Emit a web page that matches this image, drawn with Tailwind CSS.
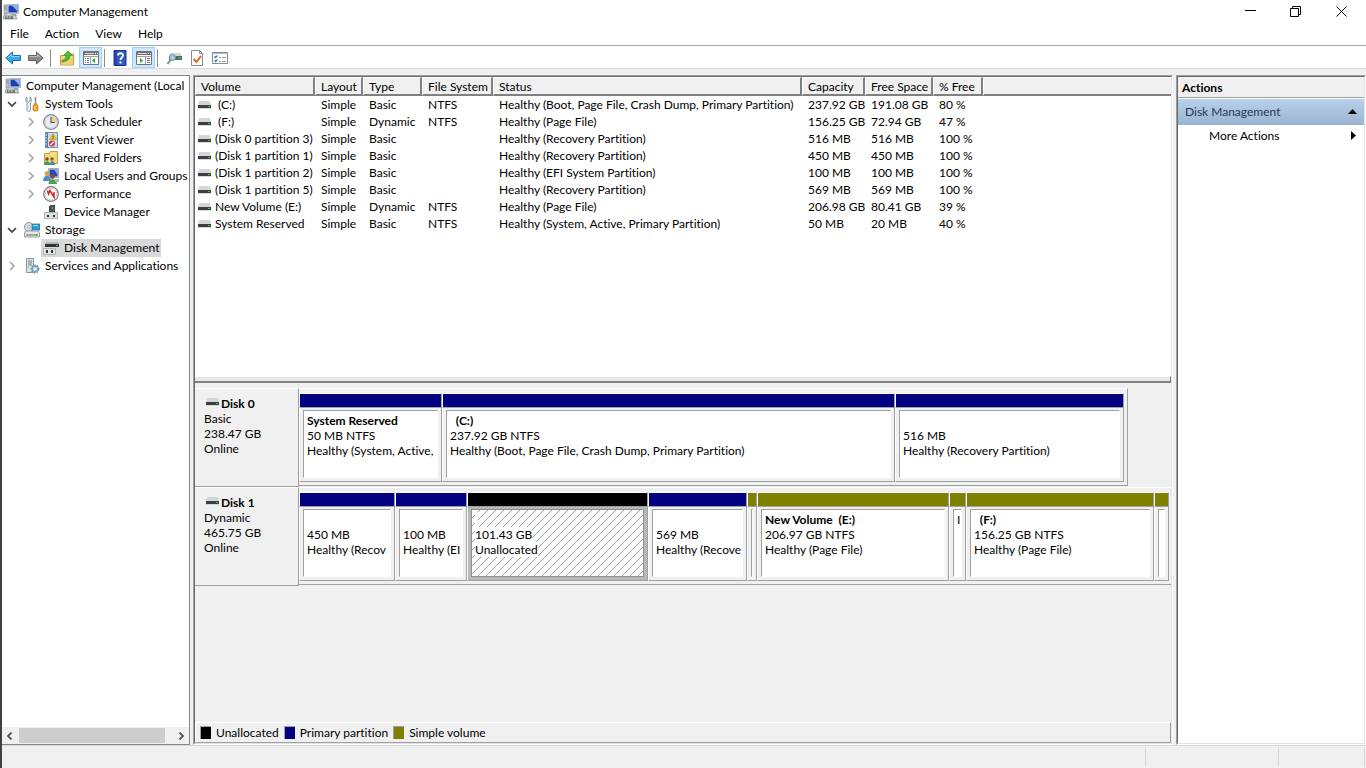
<!DOCTYPE html>
<html lang="en">
<head>
    <meta charset="UTF-8">
    <meta name="viewport" content="width=device-width, initial-scale=1.0">
    <title>Computer Management</title>
    <script src="https://cdn.jsdelivr.net/npm/@tailwindcss/browser@4"></script>
</head>
<body class="h-screen flex flex-col overflow-hidden border-l-2 border-[#404040] bg-[#f0f0f0] font-['Lato',sans-serif] [font-variant-ligatures:none] text-[12px] leading-[15px] text-black">

    <!-- Icon sprites -->
    <svg class="hidden">
        <symbol id="i-computer" viewBox="0 0 16 16">
            <path d="M1 1h3v9H1z" fill="#b9c4cf" stroke="#7c8791" stroke-width=".6"/>
            <path d="M1.500 3h2M1.500 5h2" stroke="#6a7682" stroke-width=".7"/>
            <rect x="4.500" y=".5" width="11" height="9" fill="#e0e5e8" stroke="#b3bcc4"/>
            <rect x="5.500" y="1.500" width="9" height="7" fill="#1c3fb5"/>
            <path d="M9 1.500h5.500v6z" fill="#8fb4f3"/>
            <path d="M9 10h4l1 2H8z" fill="#9aa3aa"/>
            <path d="M1 11h11l2 4H0z" fill="#cfd3cf" stroke="#7f8780" stroke-width=".7"/>
            <path d="M2 12h8v3H2z" fill="#6f7770"/>
            <path d="M3 13h2M6 13h2" stroke="#e8e8e8"/>
        </symbol>
        <symbol id="i-back" viewBox="0 0 16 16">
            <path d="M.8 8L7.500 2v3.500h8v5h-8V14z" fill="#36a9e8" stroke="#1c6fae"/>
            <path d="M3 7.800L6.500 4.500v2h8" fill="none" stroke="#8ed6f8"/>
        </symbol>
        <symbol id="i-forward" viewBox="0 0 16 16">
            <path d="M15.200 8L8.500 2v3.500h-8v5h8V14z" fill="#8b8b8b" stroke="#606060"/>
            <path d="M1.500 6.500h8v-2L12.500 7.500" fill="none" stroke="#bdbdbd"/>
        </symbol>
        <symbol id="i-up" viewBox="0 0 16 16">
            <path d="M1.500 5.500h5l1-1.500h7v11h-13z" fill="#f4d98a" stroke="#c79b3b"/>
            <path d="M2 8h12v6.500H2z" fill="#efcf78"/>
            <path d="M3 10.500c3-.5 4-2.500 4-5H4.500L9 .8 13.500 5.500H11c0 4-3 6-8 6.500z" fill="#55b82e" stroke="#2f8616" stroke-width=".6"/>
        </symbol>
        <symbol id="i-tree-pane" viewBox="0 0 16 16">
            <path d="M.5 1.500h15v13H.5z" fill="#fff" stroke="#747474"/>
            <path d="M1 2h14v3H1z" fill="#747474"/>
            <path d="M2 3.500h9" stroke="#d8d8d8"/>
            <path d="M12 3.500h1M14 3.500h1" stroke="#fff"/>
            <path d="M1 6.500h14M7.500 7v7" stroke="#a2a2a2"/>
            <path d="M2 8.500h1M4 8.500h2M2 10.500h1M4 10.500h2M2 12.500h1M4 12.500h2" stroke="#4d78ad"/>
            <path d="M12 8v5l-3-2.500z" fill="#28a628"/>
        </symbol>
        <symbol id="i-action-pane" viewBox="0 0 16 16">
            <path d="M.5 1.500h15v13H.5z" fill="#fff" stroke="#747474"/>
            <path d="M1 2h14v3H1z" fill="#747474"/>
            <path d="M2 3.500h9" stroke="#d8d8d8"/>
            <path d="M12 3.500h1M14 3.500h1" stroke="#fff"/>
            <path d="M1 6.500h14M9.500 7v7" stroke="#a2a2a2"/>
            <path d="M11 8.500h3M11 10.500h3M11 12.500h3" stroke="#4d78ad"/>
            <path d="M4 8v5l3-2.500z" fill="#28a628"/>
        </symbol>
        <symbol id="i-help" viewBox="0 0 16 16">
            <path d="M2 .5h12v15H2z" fill="#3357c4" stroke="#1b3488"/>
            <path d="M2.500 1h2v14h-2z" fill="#23409c"/>
            <path d="M6 5.500C6 2.500 11 2.500 11 5.500 11 7.500 8.500 7.500 8.500 10" fill="none" stroke="#fff" stroke-width="1.800"/>
            <path d="M7.500 11.500h2v2h-2z" fill="#fff"/>
        </symbol>
        <symbol id="i-disk-search" viewBox="0 0 16 16">
            <path d="M4 3h10l2 3H3z" fill="#d2d6da"/>
            <path d="M3 6h13v4H3z" fill="#5a6265"/>
            <path d="M12 7h3v2h-3z" fill="#19c32c"/>
            <circle cx="6.500" cy="7.500" r="3" fill="#a9c9dd" stroke="#7a8b97"/>
            <path d="M4.500 10L1.500 14" stroke="#8a8f94" stroke-width="2"/>
        </symbol>
        <symbol id="i-doc-check" viewBox="0 0 16 16">
            <path d="M2.500.5h8l3 3v12h-11z" fill="#fff" stroke="#8b8b8b"/>
            <path d="M10.500.5v3h3" fill="none" stroke="#8b8b8b"/>
            <path d="M4.500 9l3 3 4.500-6" fill="none" stroke="#e8571c" stroke-width="1.800"/>
        </symbol>
        <symbol id="i-checklist" viewBox="0 0 16 16">
            <path d="M.5 2.500h15v11H.5z" fill="#fff" stroke="#8a8a8a"/>
            <path d="M1 3h14v1H1z" fill="#b9b9b9"/>
            <path d="M2.500 6.500l1 1 2-2M2.500 10.500l1 1 2-2" fill="none" stroke="#2f82d0" stroke-width="1.300"/>
            <path d="M7 7.500h2M10 7.500h4M7 11.500h2M10 11.500h4" stroke="#8c9aa8"/>
        </symbol>
        <symbol id="i-tools" viewBox="0 0 16 16">
            <path d="M3 1v4l1.500 1L6 5V1c2 1 2 4 .5 5.500V14c0 2-3.500 2-3.500 0V6.500C1 5 1 2 3 1z" fill="#eceff1" stroke="#7d858b" stroke-width=".8"/>
            <path d="M11.500 1v7" stroke="#868d92" stroke-width="1.500"/>
            <path d="M10 8h3v1l1 1v4c0 1.500-5 1.500-5 0v-4l1-1z" fill="#f0a418" stroke="#a86b0a" stroke-width=".6"/>
            <path d="M11 10v4" stroke="#ffe08c"/>
        </symbol>
        <symbol id="i-clock" viewBox="0 0 16 16">
            <circle cx="8" cy="8" r="7.300" fill="#e9edf0" stroke="#858b90" stroke-width="1.300"/>
            <path d="M8 8V2a6 6 0 0 1 6 6z" fill="#f6cf94"/>
            <path d="M8 3v5.500h4" fill="none" stroke="#4f5b66" stroke-width="1.200"/>
            <circle cx="8" cy="8" r="5.800" fill="none" stroke="#cdd4da" stroke-width=".8"/>
        </symbol>
        <symbol id="i-event" viewBox="0 0 16 16">
            <path d="M2.500.5h12v15h-12z" fill="#c9dcf0" stroke="#6e8db3"/>
            <path d="M2.500.5h2.500v15H2.500z" fill="#587eb0"/>
            <path d="M1 3h3M1 6h3M1 9h3M1 12h3" stroke="#dfe6ee"/>
            <path d="M10 1.500l3.500 6h-7z" fill="#ffd02e" stroke="#bb8a0a" stroke-width=".6"/>
            <path d="M10 3.500v2.200M10 6.200v.8" stroke="#443300" stroke-width=".9"/>
            <circle cx="9" cy="11.500" r="3" fill="#d83a32"/>
            <path d="M7.500 13l3-3" stroke="#fff" stroke-width="1.200"/>
        </symbol>
        <symbol id="i-shared" viewBox="0 0 16 16">
            <path d="M1.500 3.500h5l1-2h7v12h-13z" fill="#f6dc8d" stroke="#cf9f35"/>
            <path d="M2 5h12v8H2z" fill="#f5d67c"/>
            <circle cx="4" cy="9" r="1.700" fill="#6d4f34"/>
            <path d="M1 15c0-5 6-5 6 0z" fill="#3aa05b"/>
            <circle cx="9" cy="9" r="1.700" fill="#7b5a3a"/>
            <path d="M6.500 15c0-5 5.500-5 5.500 0z" fill="#4b88c9"/>
        </symbol>
        <symbol id="i-users" viewBox="0 0 16 16">
            <path d="M5.500.5h10v9h-10z" fill="#dfe4e8" stroke="#a5adb4"/>
            <path d="M6.500 1.500h8v7h-8z" fill="#2447bd"/>
            <path d="M11 1.500h3.500v5z" fill="#8fb1f2"/>
            <circle cx="4" cy="5.500" r="2.500" fill="#d6a34d"/>
            <path d="M0 13c0-7 8-7 8 0z" fill="#4a8bd1"/>
            <circle cx="9.500" cy="8.500" r="2.400" fill="#805533"/>
            <path d="M5.500 16c0-6.500 8.500-6.500 8.500 0z" fill="#4ca34a"/>
            <path d="M12 11h4v3h-4z" fill="#aeb4b7"/>
        </symbol>
        <symbol id="i-perf" viewBox="0 0 16 16">
            <circle cx="8" cy="8" r="7.300" fill="#fff" stroke="#777" stroke-width="1.200"/>
            <circle cx="8" cy="8" r="5.800" fill="none" stroke="#c9c9c9" stroke-width=".8"/>
            <path d="M4.500 4.500l1 3.500 1.500-3.500L11 11V6" fill="none" stroke="#d92020" stroke-width="1.500"/>
        </symbol>
        <symbol id="i-device" viewBox="0 0 16 16">
            <path d="M1.500 8.500h13v6h-13z" fill="#dcdedf" stroke="#b0b4b6"/>
            <path d="M4 11h2v2H4zM10 11h2v2h-2z" fill="#303436"/>
            <path d="M6 8V2l2-1h4v7z" fill="#484d50"/>
            <path d="M9 3h1v2H9z" fill="#39d93f"/>
        </symbol>
        <symbol id="i-storage" viewBox="0 0 16 16">
            <circle cx="5" cy="5" r="4.500" fill="#d6dde2" stroke="#8c979f"/>
            <circle cx="5" cy="5" r="1.300" fill="#fff" stroke="#8c979f" stroke-width=".6"/>
            <path d="M8 2h8v6H8z" fill="#2c9bd6" stroke="#1a6d9e" stroke-width=".7"/>
            <path d="M9 3h5v1H9z" fill="#a5dcf7"/>
            <path d="M1.500 9h13l1 2v4H.5v-4z" fill="#e3e6e7" stroke="#868c90" stroke-width=".8"/>
            <path d="M2 12h12v2H2z" fill="#a3aaad"/>
            <path d="M11 12h3v1.500h-3z" fill="#2ed43a"/>
        </symbol>
        <symbol id="i-diskmgmt" viewBox="0 0 16 16">
            <path d="M3 2h12l1 2H2z" fill="#b4b8ba"/>
            <path d="M2 4h14v3H2z" fill="#2f3436"/>
            <path d="M13 5h2v1h-2z" fill="#35d83c"/>
            <path d="M.5 8.500h12v6H.5z" fill="#e2e4e5" stroke="#b0b4b6"/>
            <path d="M3 10h2v3H3zM8 10h2v3H8z" fill="#303436"/>
        </symbol>
        <symbol id="i-services" viewBox="0 0 16 16">
            <path d="M2.500.5h7v14h-7z" fill="#dfe4e7" stroke="#8a959c"/>
            <path d="M4 3h4M4 5h4M4 7h4" stroke="#66747f" stroke-width=".9"/>
            <path d="M4 9h1" stroke="#2ac72a"/>
            <circle cx="11" cy="11" r="3.600" fill="#bcd8ee" stroke="#5f8db3" stroke-width="1.600" stroke-dasharray="1.600 1"/>
            <circle cx="11" cy="11" r="2.600" fill="#cfe3f3" stroke="#6d98bb"/>
            <circle cx="11" cy="11" r="1" fill="#fff"/>
        </symbol>
        <symbol id="i-drive" viewBox="0 0 13 8">
            <path d="M1 0h11l1 4H0z" fill="#d3d7dc"/>
            <path d="M0 4h13v3H0z" fill="#3b3f41"/>
            <path d="M0 7h13v1H0z" fill="#d5d8da"/>
            <path d="M10 5h2v1h-2z" fill="#17e425"/>
        </symbol>
        <symbol id="i-open" viewBox="0 0 10 10"><path d="M1 3l4 4 4-4" fill="none" stroke="#404040" stroke-width="1.700"/></symbol>
        <symbol id="i-closed" viewBox="0 0 10 10"><path d="M3 1l4 4-4 4" fill="none" stroke="#a6a6a6" stroke-width="1.700"/></symbol>
    </svg>

    <!-- Title bar -->
    <header class="h-[23px] shrink-0 flex items-center bg-white pl-px">
        <svg class="w-4 h-4 mr-1"><use href="#i-computer"/></svg>
        <h1 class="grow">Computer Management</h1>
        <button aria-label="Minimize" class="w-[46px] h-full flex items-center justify-center"><svg class="w-[11px] h-[11px]" viewBox="0 0 11 11"><path d="M0 4.500h11" stroke="#000"/></svg></button>
        <button aria-label="Restore" class="w-[45px] h-full flex items-center justify-center"><svg class="w-[11px] h-[11px]" viewBox="0 0 11 11" fill="none" stroke="#000"><path d="M.5 2.500h8v8h-8zM2.500 2.500v-2h8v8h-2"/></svg></button>
        <button aria-label="Close" class="w-[46px] mr-[2px] h-full flex items-center justify-center"><svg class="w-[11px] h-[11px]" viewBox="0 0 11 11" stroke="#000"><path d="M.5.5l10 10M10.500.5l-10 10"/></svg></button>
    </header>

    <!-- Menu bar -->
    <nav class="h-[23px] shrink-0 flex items-center gap-4 bg-white pl-2 pb-[2px] border-b border-[#a8a8a8]">
        <button>File</button>
        <button>Action</button>
        <button>View</button>
        <button>Help</button>
    </nav>

    <!-- Toolbar -->
    <div class="h-[23px] shrink-0 flex items-center bg-white pl-[3px] pt-px border-b border-[#dadada]">
        <button aria-label="Back"><svg class="w-4 h-4"><use href="#i-back"/></svg></button>
        <button aria-label="Forward" class="ml-[7px]"><svg class="w-4 h-4"><use href="#i-forward"/></svg></button>
        <span class="w-px h-[18px] bg-[#8c8c8c] ml-[6px] mr-2"></span>
        <button aria-label="Up one level"><svg class="w-4 h-4"><use href="#i-up"/></svg></button>
        <button aria-label="Show or hide console tree" class="w-[23px] h-[21px] ml-1 flex items-center justify-center bg-[#cce8ff] border border-[#99d1ff]"><svg class="w-4 h-4"><use href="#i-tree-pane"/></svg></button>
        <span class="w-px h-[18px] bg-[#8c8c8c] ml-[2px] mr-[7px]"></span>
        <button aria-label="Help"><svg class="w-4 h-4"><use href="#i-help"/></svg></button>
        <button aria-label="Show or hide action pane" class="w-[23px] h-[21px] ml-1 flex items-center justify-center bg-[#cce8ff] border border-[#99d1ff]"><svg class="w-4 h-4"><use href="#i-action-pane"/></svg></button>
        <span class="w-px h-[18px] bg-[#8c8c8c] ml-[2px] mr-2"></span>
        <button aria-label="Rescan disks"><svg class="w-4 h-4"><use href="#i-disk-search"/></svg></button>
        <button aria-label="Properties" class="ml-[7px]"><svg class="w-4 h-4"><use href="#i-doc-check"/></svg></button>
        <button aria-label="Settings" class="ml-[7px]"><svg class="w-4 h-4"><use href="#i-checklist"/></svg></button>
    </div>

    <main class="grow min-h-0 flex pt-[6px]">
        <!-- Console tree -->
        <aside class="w-[188px] shrink-0 flex flex-col bg-white border-t border-r border-b border-[#828790]">
            <div class="grow overflow-hidden whitespace-nowrap pt-px">
                <div class="h-[18px] flex items-center gap-[5px] pl-[3px] pb-px"><svg class="w-4 h-4 shrink-0"><use href="#i-computer"/></svg>Computer Management (Local</div>
                <ul id="tree"></ul>
            </div>
            <div class="h-[17px] flex items-center justify-between bg-[#f0f0f0] px-1">
                <button aria-label="Scroll left"><svg class="w-[8px] h-[8px]" viewBox="0 0 8 8"><path d="M5.500.5L2 4l3.500 3.500" fill="none" stroke="#505050" stroke-width="1.800"/></svg></button>
                <div class="grow h-[15px] ml-[5px] mr-[12px] bg-[#cdcdcd]"></div>
                <button aria-label="Scroll right"><svg class="w-[8px] h-[8px]" viewBox="0 0 8 8"><path d="M2.500.5L6 4 2.500 7.500" fill="none" stroke="#505050" stroke-width="1.800"/></svg></button>
            </div>
        </aside>

        <!-- Volume list and disk map -->
        <section class="grow min-w-0 flex flex-col mx-[3px] border border-t-[#a0a0a0] border-l-[#a0a0a0] border-r-white border-b-white">
            <div class="grow min-h-0 flex flex-col border border-t-[#696969] border-l-[#696969] border-r-[#e3e3e3] border-b-[#e3e3e3]">
                <div class="h-[299px] shrink-0 bg-white overflow-hidden">
                    <table class="w-full table-fixed border-collapse whitespace-nowrap">
                        <colgroup>
                            <col class="w-[120px]"><col class="w-[48px]"><col class="w-[59px]"><col class="w-[71px]"><col class="w-[309px]"><col class="w-[63px]"><col class="w-[68px]"><col class="w-[50px]"><col>
                        </colgroup>
                        <thead>
                            <tr id="volume-head"></tr>
                        </thead>
                        <tbody id="volumes"></tbody>
                    </table>
                </div>
                <div class="h-[7px] shrink-0 bg-[#e8e8e8] border-t border-t-white border-b-2 border-b-[#808080] border-r border-r-[#808080]"></div>
                <div id="disks" class="grow pt-[5px]"></div>
                <div class="h-[21px] shrink-0 flex items-center gap-[5px] pl-1 pb-px border border-t-white border-l-white border-b-[#a0a0a0] border-r-[#a0a0a0]">
                    <span class="w-[11px] h-[13px] bg-black border-t border-l border-[#a0a0a0]"></span>Unallocated
                    <span class="w-[11px] h-[13px] bg-[#000080] border-t border-l border-[#a0a0a0]"></span>Primary partition
                    <span class="w-[11px] h-[13px] bg-[#808000] border-t border-l border-[#a0a0a0]"></span>Simple volume
                </div>
            </div>
        </section>

        <!-- Actions pane -->
        <aside class="w-[190px] shrink-0 border border-t-[#a0a0a0] border-l-[#a0a0a0] border-r-white border-b-white">
            <div class="h-full bg-white border border-t-[#696969] border-l-[#696969] border-r-[#e3e3e3] border-b-[#e3e3e3]">
                <h2 class="h-[21px] flex items-center bg-[#f0f0f0] border-b border-[#a0a0a0] pl-1 font-bold">Actions</h2>
                <button class="w-full h-[26px] mt-px flex items-center justify-between px-[7px] pb-px bg-linear-to-b from-[#b9d1ea] to-[#99b4d1] text-[#1e395b]">Disk Management
                    <svg class="w-[9px] h-[5px]" viewBox="0 0 9 5"><path d="M4.500 0L9 5H0z" fill="#000"/></svg>
                </button>
                <button class="w-full h-[20px] flex items-center justify-between pl-[31px] pr-2">More Actions
                    <svg class="w-[5px] h-[9px]" viewBox="0 0 5 9"><path d="M0 0l5 4.500L0 9z" fill="#000"/></svg>
                </button>
            </div>
        </aside>
    </main>

    <!-- Status bar -->
    <footer class="h-[23px] shrink-0 flex border-t border-[#d7d7d7] py-px">
        <div class="grow border-r border-[#d7d7d7]"></div>
        <div class="w-[133px] border-r border-[#d7d7d7]"></div>
        <div class="w-[86px] mr-px border-r border-[#d7d7d7]"></div>
    </footer>

    <script>
        // --- Data ---
        const tree = [
            { level: 1, state: 'open', icon: 'tools', name: 'System Tools' },
            { level: 2, state: 'closed', icon: 'clock', name: 'Task Scheduler' },
            { level: 2, state: 'closed', icon: 'event', name: 'Event Viewer' },
            { level: 2, state: 'closed', icon: 'shared', name: 'Shared Folders' },
            { level: 2, state: 'closed', icon: 'users', name: 'Local Users and Groups' },
            { level: 2, state: 'closed', icon: 'perf', name: 'Performance' },
            { level: 2, icon: 'device', name: 'Device Manager' },
            { level: 1, state: 'open', icon: 'storage', name: 'Storage' },
            { level: 2, icon: 'diskmgmt', name: 'Disk Management', selected: true },
            { level: 1, state: 'closed', icon: 'services', name: 'Services and Applications' }
        ];

        const columns = ['Volume', 'Layout', 'Type', 'File System', 'Status', 'Capacity', 'Free Space', '% Free', ''];

        const volumes = [
            ['&nbsp;(C:)', 'Simple', 'Basic', 'NTFS', 'Healthy (Boot, Page File, Crash Dump, Primary Partition)', '237.92 GB', '191.08 GB', '80 %'],
            ['&nbsp;(F:)', 'Simple', 'Dynamic', 'NTFS', 'Healthy (Page File)', '156.25 GB', '72.94 GB', '47 %'],
            ['(Disk 0 partition 3)', 'Simple', 'Basic', '', 'Healthy (Recovery Partition)', '516 MB', '516 MB', '100 %'],
            ['(Disk 1 partition 1)', 'Simple', 'Basic', '', 'Healthy (Recovery Partition)', '450 MB', '450 MB', '100 %'],
            ['(Disk 1 partition 2)', 'Simple', 'Basic', '', 'Healthy (EFI System Partition)', '100 MB', '100 MB', '100 %'],
            ['(Disk 1 partition 5)', 'Simple', 'Basic', '', 'Healthy (Recovery Partition)', '569 MB', '569 MB', '100 %'],
            ['New Volume (E:)', 'Simple', 'Dynamic', 'NTFS', 'Healthy (Page File)', '206.98 GB', '80.41 GB', '39 %'],
            ['System Reserved', 'Simple', 'Basic', 'NTFS', 'Healthy (System, Active, Primary Partition)', '50 MB', '20 MB', '40 %']
        ];

        // size is the share of the row that a partition takes
        const disks = [
            { name: 'Disk 0', type: 'Basic', capacity: '238.47 GB', partial: true, parts: [
                { size: 143, kind: 'primary', lines: ['System Reserved', '50 MB NTFS', 'Healthy (System, Active,'] },
                { size: 453, kind: 'primary', lines: ['&nbsp;&nbsp;(C:)', '237.92 GB NTFS', 'Healthy (Boot, Page File, Crash Dump, Primary Partition)'] },
                { size: 229, kind: 'primary', lines: ['', '516 MB', 'Healthy (Recovery Partition)'] }
            ] },
            { name: 'Disk 1', type: 'Dynamic', capacity: '465.75 GB', parts: [
                { size: 96, kind: 'primary', lines: ['', '450 MB', 'Healthy (Recov'] },
                { size: 72, kind: 'primary', lines: ['', '100 MB', 'Healthy (EI'] },
                { size: 181, kind: 'free', lines: ['&nbsp;', '101.43 GB', 'Unallocated'] },
                { size: 99, kind: 'primary', lines: ['', '569 MB', 'Healthy (Recove'] },
                { size: 10, kind: 'simple', lines: ['', '', ''] },
                { size: 192, kind: 'simple', lines: ['New Volume&nbsp; (E:)', '206.97 GB NTFS', 'Healthy (Page File)'] },
                { size: 17, kind: 'simple', lines: ['<span class="font-normal">I</span>', '', ''] },
                { size: 188, kind: 'simple', lines: ['&nbsp;&nbsp;(F:)', '156.25 GB NTFS', 'Healthy (Page File)'] },
                { size: 15, kind: 'simple', lines: ['', '', ''] }
            ] }
        ];

        const barColor = { primary: 'bg-[#000080]', simple: 'bg-[#808000]', free: 'bg-black' };

        // --- Functions ---

        function renderTree() {
            document.getElementById('tree').innerHTML = tree.map(node => {
                const arrow = node.state ? `<svg class="w-[10px] h-[10px]"><use href="#i-${node.state}"/></svg>` : '';
                return `
                    <li class="h-[18px] flex items-center ${node.level === 1 ? 'pl-[5px]' : 'pl-6'}">
                        <span class="w-[15px] shrink-0">${arrow}</span>
                        <span class="h-[18px] flex items-center gap-[5px] px-[2px] pb-px ${node.selected ? 'bg-[#d9d9d9]' : ''}">
                            <svg class="w-4 h-4 shrink-0"><use href="#i-${node.icon}"/></svg>${node.name}
                        </span>
                    </li>`;
            }).join('');
        }

        function renderVolumes() {
            document.getElementById('volume-head').innerHTML = columns.map(name => `
                <th class="p-0 font-normal text-left">
                    <div class="h-[19px] flex items-center pl-[5px] pt-px bg-[#f0f0f0] border-t border-l border-white border-b-2 border-b-[#808080] ${name ? 'border-r-2 border-r-[#808080]' : ''}">${name}</div>
                </th>`).join('');
            document.getElementById('volumes').innerHTML = volumes.map(row => `
                <tr class="h-[17px]">
                    ${row.map((cell, i) => i === 0
                        ? `<td class="p-0 pl-[3px]"><div class="flex items-center gap-1"><svg class="w-[13px] h-[8px] shrink-0"><use href="#i-drive"/></svg>${cell}</div></td>`
                        : `<td class="p-0 pl-[6px]">${cell}</td>`).join('')}
                    <td></td>
                </tr>`).join('');
        }

        function renderPartition(part) {
            const free = part.kind === 'free';
            const lines = part.lines.map((line, i) => `
                <div class="h-[15px] ${i === 0 ? 'font-bold' : ''}"><span class="${free ? 'bg-white inline-block' : ''}">${line}</span></div>`).join('');
            const hatch = `
                <svg class="absolute inset-0 w-full h-full">
                    <pattern id="hatch" width="8" height="8" patternUnits="userSpaceOnUse"><path d="M-1 9L9-1" stroke="#a0a0a0" shape-rendering="crispEdges"/></pattern>
                    <rect width="100%" height="100%" fill="url(#hatch)"/>
                </svg>`;
            return `
                <div class="basis-0 min-w-0 flex flex-col" style="flex-grow: ${part.size}">
                    <div class="h-[15px] border border-t-white border-l-white border-r-[#a0a0a0] border-b-[#a0a0a0] ${barColor[part.kind]}"></div>
                    <div class="grow p-[3px] pt-[2px] border-l border-r border-b border-l-white border-r-[#a0a0a0] border-b-[#a0a0a0] ${free ? 'bg-[#b8b8b8]' : ''}">
                        <div class="relative h-full overflow-hidden whitespace-nowrap bg-white border ${free ? 'border-[#909090]' : 'border-t-[#a0a0a0] border-l-[#a0a0a0] border-r-white border-b-white'}">
                            ${free ? hatch : ''}
                            <div class="relative pt-[2px] ml-[3px] mr-px overflow-hidden">${lines}</div>
                        </div>
                    </div>
                </div>`;
        }

        function renderDisks() {
            document.getElementById('disks').innerHTML = disks.map(disk => `
                <div class="h-[99px] flex">
                    <div class="w-[104px] shrink-0 pl-[9px] pt-[7px] border-t border-t-white border-b border-b-[#a0a0a0] border-r border-r-[#a0a0a0]">
                        <div class="flex gap-[2px] font-bold"><svg class="w-[13px] h-[8px] mt-[2px] ml-[2px]"><use href="#i-drive"/></svg>${disk.name}</div>
                        <div>${disk.type}</div>
                        <div>${disk.capacity}</div>
                        <div>Online</div>
                    </div>
                    <div class="h-[98px] grow min-w-0 flex pt-1 pb-[3px] border-t border-t-white border-b border-b-[#a0a0a0] ${disk.partial ? 'mr-[43px] pr-[3px] border-r border-r-[#a0a0a0]' : 'pr-[2px]'}">
                        ${disk.parts.map(renderPartition).join('')}
                    </div>
                </div>`).join('');
        }

        // --- Initial Load ---
        renderTree();
        renderVolumes();
        renderDisks();
    </script>
</body>
</html>
